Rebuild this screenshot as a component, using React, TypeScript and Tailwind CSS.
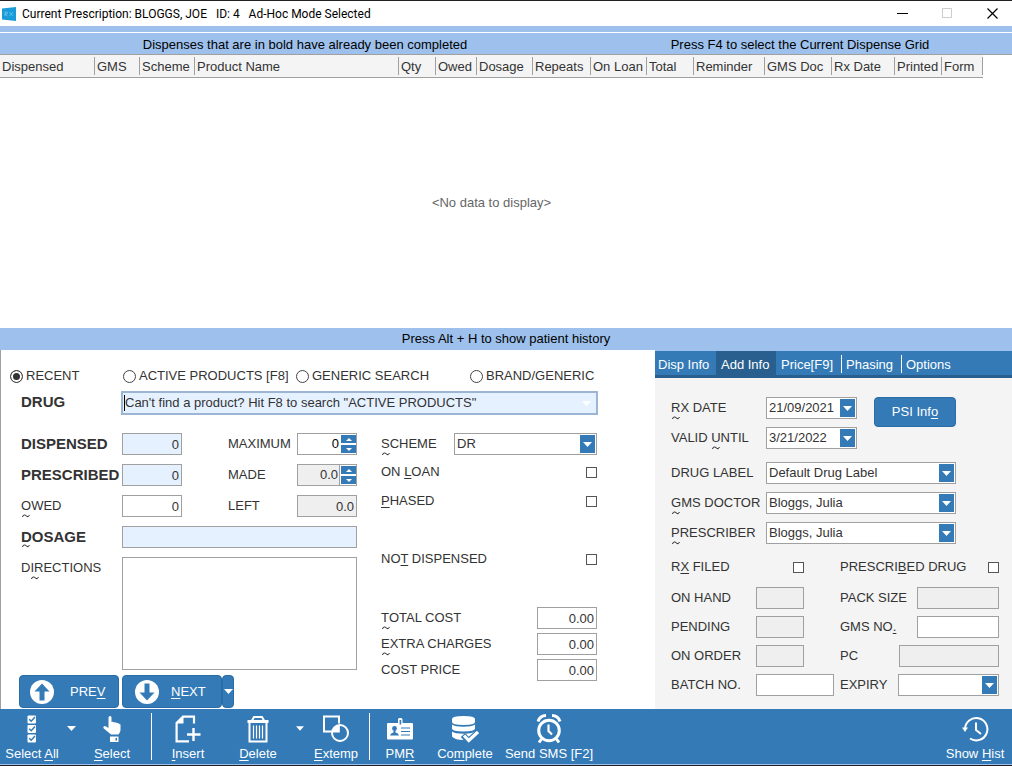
import type { ReactNode } from "react";

const columns = [
  { label: "Dispensed", width: "w-[95px]" },
  { label: "GMS", width: "w-[45px]" },
  { label: "Scheme", width: "w-[55px]" },
  { label: "Product Name", width: "w-[204px]" },
  { label: "Qty", width: "w-[37px]" },
  { label: "Owed", width: "w-[41px]" },
  { label: "Dosage", width: "w-[56px]" },
  { label: "Repeats", width: "w-[58px]" },
  { label: "On Loan", width: "w-[56px]" },
  { label: "Total", width: "w-[47px]" },
  { label: "Reminder", width: "w-[71px]" },
  { label: "GMS Doc", width: "w-[67px]" },
  { label: "Rx Date", width: "w-[63px]" },
  { label: "Printed", width: "w-[47px]" },
  { label: "Form", width: "w-[41px]" },
];

const labelClass = "text-[13px] leading-[22px] text-[#333] whitespace-nowrap";
const boldClass = "text-[15px] font-bold leading-[22px] text-[#333] whitespace-nowrap";
const boxClass = "block h-[22px] min-w-0 border border-[#a0a0a0] px-[2px] text-[#333] outline-none";

// Accelerator letter with the small squiggle below it
function Key({ children }: { children: ReactNode }) {
  return (
    <span className="relative">
      {children}
      <svg className="absolute left-px top-4" width="8" height="4" viewBox="0 0 8 4">
        <path d="M.5 3Q1 .8 2.500 1T5 2.500 7.500 1" fill="none" stroke="#222" />
      </svg>
    </span>
  );
}

function U({ children }: { children: ReactNode }) {
  return <span className="underline underline-offset-2">{children}</span>;
}

function Triangle() {
  return (
    <svg width="9" height="5" viewBox="0 0 9 5" fill="currentColor">
      <path d="M0 0h9L4.500 5z" />
    </svg>
  );
}

function DropBox({ id, value, className = "" }: { id: string; value: string; className?: string }) {
  return (
    <div className={`relative h-[22px] ${className}`}>
      <select id={id} className={`${boxClass} w-full appearance-none bg-white pr-5`} defaultValue={value}>
        <option>{value}</option>
      </select>
      <span className="pointer-events-none absolute right-[2px] top-[2px] flex h-[18px] w-[15px] items-center justify-center bg-[#337ab7] text-white">
        <Triangle />
      </span>
    </div>
  );
}

function Spinner({ id, value, disabled = false }: { id: string; value: string; disabled?: boolean }) {
  return (
    <div className="flex h-[22px] w-[60px] border border-[#a0a0a0] bg-white">
      <input
        id={id}
        defaultValue={value}
        className={`w-[42px] min-w-0 pr-px text-right outline-none ${disabled ? "border-r border-[#a0a0a0] bg-[#efefef] text-[#333]" : "bg-white text-black"}`}
      />
      <div className="flex flex-col gap-[2px] py-px pl-px">
        <button aria-label="Increase" className="flex h-2 w-[15px] items-center justify-center bg-[#337ab7] text-white">
          <svg width="6" height="3" viewBox="0 0 6 3" fill="currentColor"><path d="M0 3h6L3 0z" /></svg>
        </button>
        <button aria-label="Decrease" className="flex h-2 w-[15px] items-center justify-center bg-[#337ab7] text-white">
          <svg width="6" height="3" viewBox="0 0 6 3" fill="currentColor"><path d="M0 0h6L3 3z" /></svg>
        </button>
      </div>
    </div>
  );
}

function Radio({ label, id, checked = false }: { label: string; id: string; checked?: boolean }) {
  return (
    <div className="flex items-center gap-[3px]">
      <input
        type="radio"
        name="search"
        id={id}
        defaultChecked={checked}
        className="size-[13px] shrink-0 appearance-none rounded-full border border-[#444] bg-white checked:bg-[#333] checked:shadow-[inset_0_0_0_2px_#fff]"
      />
      <label htmlFor={id} className={labelClass}>{label}</label>
    </div>
  );
}

function Check({ id }: { id: string }) {
  return <input type="checkbox" id={id} className="size-[11px] shrink-0 appearance-none border border-[#555] bg-white checked:bg-[#333]" />;
}

function ToolButton({ icon, width, children }: { icon: ReactNode; width: string; children: ReactNode }) {
  return (
    <button className={`flex flex-col items-center pt-[6px] ${width}`}>
      <span className="flex h-7 items-center justify-center">{icon}</span>
      <span className="mt-px whitespace-nowrap leading-5">{children}</span>
    </button>
  );
}

function SelectAllIcon() {
  return (
    <svg width="10" height="28" viewBox="0 0 10 28">
      {[0, 9.5, 19].map((y) => (
        <g key={y} transform={`translate(0 ${y})`}>
          <rect x="0.5" y="0.5" width="8.5" height="8" rx="1" fill="#fff" />
          <path d="M2.200 4.200l2 2 3.800-4.200" fill="none" stroke="#337ab7" strokeWidth="1.500" />
        </g>
      ))}
    </svg>
  );
}

function HandIcon() {
  return (
    <svg width="18" height="28" viewBox="0 0 18 28" fill="#fff">
      <path d="M5.500 2.500Q5.500 1 7 1t1.500 1.500V7q1.500-.8 2.700.5 1.500-.7 2.600.6 1.300-.5 2.200.6L17.500 9.500V15q0 2.500-2 4.500H8L.8 13.500q-1-1.300 0-2.100 1-.7 2.200.1l2.500 1.500z" />
      <path d="M7 21.500h8.500V27H7z" />
      <path d="M12.500 23H14v2.500h-1.500z" fill="#337ab7" />
    </svg>
  );
}

function InsertIcon() {
  return (
    <svg width="26" height="28" viewBox="0 0 26 28" fill="none" stroke="#fff" strokeWidth="2.200">
      <path d="M19 8.500V1.600H8L1.600 8v18.400H14" />
      <path d="M8.500 1L1 8.500h7.500z" fill="#fff" stroke="none" />
      <path d="M18.500 13v13M12 19.500h13.500" strokeWidth="2.400" />
    </svg>
  );
}

function TrashIcon() {
  return (
    <svg width="22" height="28" viewBox="0 0 22 28" fill="none" stroke="#fff" strokeWidth="2">
      <path d="M0.500 6.500h21" strokeWidth="3" />
      <path d="M5 5.500L7 2h8l2 3.500" />
      <path d="M2.500 7.500V26.500h17V7.500" />
      <path d="M6.500 10.500v13M9.500 10.500v13M12.500 10.500v13M15.500 10.500v13" strokeWidth="1.200" />
    </svg>
  );
}

function ExtempIcon() {
  return (
    <svg width="26" height="28" viewBox="0 0 26 28" fill="none" stroke="#fff" strokeWidth="2">
      <path d="M16 8.500V1.500H1v15h7.500" />
      <circle cx="17" cy="18" r="8" />
      <path d="M9 17.500A8 8 0 0 1 16.800 10v7.500z" fill="#fff" stroke="none" />
    </svg>
  );
}

function PmrIcon() {
  return (
    <svg width="26" height="28" viewBox="0 0 26 28">
      <path d="M1 8h10V4.500q0-1.500 1.500-1.500h1.500q1.500 0 1.500 1.500V8H25q1 0 1 1v14.500q0 1-1 1H1q-1 0-1-1V9q0-1 1-1z" fill="#fff" />
      <path d="M12.600 5h1.600v4.500h-1.600z" fill="#337ab7" />
      <circle cx="7.500" cy="13.500" r="2.400" fill="#337ab7" />
      <path d="M3 20.500q.5-2.500 3.500-3v-2h2v2q3 .5 3.500 3z" fill="#337ab7" />
      <path d="M14 13h9M14 16.500h9M14 20h9" stroke="#337ab7" strokeWidth="1.200" />
    </svg>
  );
}

function CompleteIcon() {
  return (
    <svg width="27" height="28" viewBox="0 0 27 28">
      <path d="M0 4q0-3 11.500-3T23 4v3q0 3-11.500 3T0 7z" fill="#fff" />
      <path d="M0 9.500q3 2.200 11.500 2.200T23 9.500v4q0 3-11.500 3T0 13.500z" fill="#fff" />
      <path d="M0 16.500q3 2.200 11.500 2.200T23 16.500v5q-3 3.500-11.500 3.500T0 21.500z" fill="#fff" />
      <path d="M11 20l5.500 6L27 16.500" fill="none" stroke="#337ab7" strokeWidth="6" />
      <path d="M12 20.500l4.800 5L26 17" fill="none" stroke="#fff" strokeWidth="3.200" />
    </svg>
  );
}

function AlarmIcon() {
  return (
    <svg width="26" height="30" viewBox="0 0 26 30" fill="none" stroke="#fff">
      <circle cx="13" cy="16.500" r="10.300" strokeWidth="3" />
      <path d="M2 7.500Q4 1.500 10 1.500M24 7.500Q22 1.500 16 1.500" strokeWidth="3" />
      <path d="M5.500 25L3 28.500M20.500 25l2.500 3.500" strokeWidth="3" />
      <path d="M12.500 10.500v6.500l3.500 3.500" strokeWidth="2.200" />
    </svg>
  );
}

function HistoryIcon() {
  return (
    <svg width="27" height="28" viewBox="0 0 27 28" fill="none" stroke="#fff" strokeWidth="2">
      <path d="M3 14A11.200 11.200 0 1 1 8 23.500" />
      <path d="M0 12.500h6L3 17z" fill="#fff" stroke="none" />
      <path d="M14 7.500V15l5 4" />
    </svg>
  );
}

function RoundArrow({ up = false }: { up?: boolean }) {
  return (
    <svg width="24" height="24" viewBox="0 0 24 24" className={up ? "rotate-180" : ""}>
      <circle cx="12" cy="12" r="12" fill="#fff" />
      <path d="M12 20.500L4.500 12.500h5V3.500h5v9h5z" fill="#337ab7" />
    </svg>
  );
}

function TitleBar() {
  return (
    <header className="flex h-[26px] items-center border-t border-[#231f20] bg-white pl-[2px]">
      <svg width="14" height="14" viewBox="0 0 14 14">
        <path d="M0 1.500L14 0v14L0 12.500z" fill="#1a9ad7" />
        <path d="M3 9V5h2q1.200 1 0 2H3l2.500 2M7.500 5l3.500 4M11 5L7.500 9" fill="none" stroke="#6cc6ee" strokeWidth="0.800" />
      </svg>
      <h1 className="ml-[6px] whitespace-pre font-['Roboto'] text-[12px] leading-4 text-black">
        {"Current Prescription: BLOGGS, JOE   ID: 4   Ad-Hoc Mode Selected"}
      </h1>
      <div className="ml-auto flex items-center gap-[34px] pr-[14px] text-black">
        <button aria-label="Minimise">
          <svg width="11" height="11" viewBox="0 0 11 11"><path d="M0 5.500h11" stroke="currentColor" /></svg>
        </button>
        <button aria-label="Maximise" disabled className="text-[#ccc]">
          <svg width="11" height="11" viewBox="0 0 11 11"><path d="M.5.5h9v9H.5z" fill="none" stroke="currentColor" /></svg>
        </button>
        <button aria-label="Close">
          <svg width="11" height="11" viewBox="0 0 11 11"><path d="M.5.5l10 10M10.500.5l-10 10" stroke="currentColor" strokeWidth="1.200" /></svg>
        </button>
      </div>
    </header>
  );
}

function DrugForm() {
  return (
    <section className="flex min-w-0 flex-1 flex-col border-l border-[#a0a0a0] bg-white pt-[15px]">
      <div className="grid grid-cols-[113px_173px_174px_auto] pl-[9px]">
        <Radio id="recent" label="RECENT" checked />
        <Radio id="active" label="ACTIVE PRODUCTS [F8]" />
        <Radio id="generic" label="GENERIC SEARCH" />
        <Radio id="brand" label="BRAND/GENERIC" />
      </div>

      <div className="mt-1 flex pl-5">
        <label htmlFor="drug" className={`w-[100px] ${boldClass}`}>DRUG</label>
        <div className="flex h-6 w-[477px] items-center border-2 border-[#9bb5d3] bg-[#e5f1ff] pl-px pr-[5px]">
          <span className="h-4 w-px bg-black" />
          <input id="drug" defaultValue={'Can\'t find a product? Hit F8 to search "ACTIVE PRODUCTS"'} className="min-w-0 flex-1 outline-none" />
          <span className="text-white"><Triangle /></span>
        </div>
      </div>

      <div className="mt-[18px] flex gap-6 pl-[18px]">
        <div className="w-[338px]">
          <div className="grid grid-cols-[101px_106px_69px_60px] gap-y-[9px] pl-[2px]">
            <label htmlFor="dispensed" className={boldClass}>DISPENSED</label>
            <input id="dispensed" defaultValue="0" className={`${boxClass} w-[60px] bg-[#e5f1ff] text-right`} />
            <label htmlFor="maximum" className={labelClass}>MAXIMUM</label>
            <Spinner id="maximum" value="0" />

            <label htmlFor="prescribed" className={boldClass}>PRESCRIBED</label>
            <input id="prescribed" defaultValue="0" className={`${boxClass} w-[60px] bg-[#e5f1ff] text-right`} />
            <label htmlFor="made" className={labelClass}>MADE</label>
            <Spinner id="made" value="0.0" disabled />

            <label htmlFor="owed" className={labelClass}><Key>O</Key>WED</label>
            <input id="owed" defaultValue="0" className={`${boxClass} w-[60px] bg-white text-right`} />
            <label htmlFor="left" className={labelClass}>LEFT</label>
            <input id="left" defaultValue="0.0" className={`${boxClass} w-[60px] bg-[#efefef] text-right`} />

            <label htmlFor="dosage" className={boldClass}><Key>D</Key>OSAGE</label>
            <input id="dosage" className={`${boxClass} col-span-3 bg-[#e5f1ff]`} />

            <label htmlFor="directions" className={labelClass}>D<Key>I</Key>RECTIONS</label>
            <textarea id="directions" className="col-span-3 block h-[113px] resize-none border border-[#a0a0a0] bg-white p-[2px] outline-none" />
          </div>

          <div className="mt-[5px] flex gap-[3px] text-white">
            <button className="flex h-[33px] w-[100px] items-center rounded border border-[#2a6ca6] bg-[#337ab7] pl-[10px]">
              <RoundArrow up />
              <span className="ml-4">PRE<U>V</U></span>
            </button>
            <div className="flex">
              <button className="flex h-[33px] w-[100px] items-center rounded border border-[#2a6ca6] bg-[#337ab7] pl-3">
                <RoundArrow />
                <span className="ml-3"><U>N</U>EXT</span>
              </button>
              <button aria-label="More" className="flex h-[33px] w-3 items-center justify-center rounded border border-[#2a6ca6] bg-[#337ab7]">
                <Triangle />
              </button>
            </div>
          </div>
        </div>

        <div className="w-[216px]">
          <div className="flex justify-between">
            <label htmlFor="scheme" className={labelClass}><Key>S</Key>CHEME</label>
            <DropBox id="scheme" value="DR" className="w-[143px]" />
          </div>
          <div className="mt-[6px] flex items-center justify-between">
            <label htmlFor="onloan" className={labelClass}>ON <U>L</U>OAN</label>
            <Check id="onloan" />
          </div>
          <div className="mt-[7px] flex items-center justify-between">
            <label htmlFor="phased" className={labelClass}><U>P</U>HASED</label>
            <Check id="phased" />
          </div>
          <div className="mt-9 flex items-center justify-between">
            <label htmlFor="notdispensed" className={labelClass}>NO<U>T</U> DISPENSED</label>
            <Check id="notdispensed" />
          </div>
          <div className="mt-[37px] flex flex-col gap-1">
            <div className="flex justify-between">
              <label htmlFor="total" className={labelClass}><Key>T</Key>OTAL COST</label>
              <input id="total" defaultValue="0.00" className={`${boxClass} w-[60px] bg-white text-right`} />
            </div>
            <div className="flex justify-between">
              <label htmlFor="extra" className={labelClass}><Key>E</Key>XTRA CHARGES</label>
              <input id="extra" defaultValue="0.00" className={`${boxClass} w-[60px] bg-white text-right`} />
            </div>
            <div className="flex justify-between">
              <label htmlFor="cost" className={labelClass}>COST PRICE</label>
              <input id="cost" defaultValue="0.00" className={`${boxClass} w-[60px] bg-white text-right`} />
            </div>
          </div>
        </div>
      </div>
    </section>
  );
}

function InfoPanel() {
  return (
    <section className="flex w-[357px] shrink-0 flex-col border-t border-[#9dc1ec] bg-[#f4f4f4]">
      <nav className="flex h-[27px] border-b-[3px] border-[#285f8f] bg-[#337ab7] text-white">
        <button className="w-[61px] pl-[3px] pt-1 text-left">Disp Info</button>
        <button className="w-[60px] bg-[#285f8f] pl-[5px] pt-1 text-left">Add Info</button>
        <button className="w-[65px] pl-[5px] pt-1 text-left">Price[F9]</button>
        <span className="mt-1 h-[18px] w-px bg-white" />
        <button className="w-[59px] pl-1 pt-1 text-left">Phasing</button>
        <span className="mt-1 h-[18px] w-px bg-white" />
        <button className="pl-1 pt-1 text-left">Options</button>
      </nav>

      <div className="flex flex-col pb-[13px] pl-4 pr-[13px] pt-[19px]">
        <div className="flex">
          <div className="grid grid-cols-[95px_91px] gap-y-2">
            <label htmlFor="rxdate" className={labelClass}><Key>R</Key>X DATE</label>
            <DropBox id="rxdate" value="21/09/2021" />
            <label htmlFor="valid" className={labelClass}>VALID <Key>U</Key>NTIL</label>
            <DropBox id="valid" value="3/21/2022" />
          </div>
          <button className="ml-[17px] h-[30px] w-[82px] rounded border border-[#2a6ca6] bg-[#337ab7] text-white">PSI Inf<U>o</U></button>
        </div>

        <div className="mt-[13px] grid grid-cols-[95px_190px] gap-y-2">
          <label htmlFor="druglabel" className={labelClass}>DRUG LABEL</label>
          <DropBox id="druglabel" value="Default Drug Label" />
          <label htmlFor="doctor" className={labelClass}><Key>G</Key>MS DOCTOR</label>
          <DropBox id="doctor" value="Bloggs, Julia" />
          <label htmlFor="prescriber" className={labelClass}><Key>P</Key>RESCRIBER</label>
          <DropBox id="prescriber" value="Bloggs, Julia" />
        </div>

        <div className="mt-3 grid grid-cols-[163px_159px] gap-x-[6px] gap-y-[7px]">
          <div className="mb-[2px] flex items-center justify-between pr-[30px]">
            <label htmlFor="rxfiled" className={labelClass}>R<U>X</U> FILED</label>
            <Check id="rxfiled" />
          </div>
          <div className="mb-[2px] flex items-center justify-between">
            <label htmlFor="prescribeddrug" className={labelClass}>PRESCRI<U>B</U>ED DRUG</label>
            <Check id="prescribeddrug" />
          </div>

          <div className="flex">
            <label htmlFor="onhand" className={`w-[85px] ${labelClass}`}>ON HAND</label>
            <input id="onhand" className={`${boxClass} w-12 bg-[#efefef]`} />
          </div>
          <div className="flex justify-between">
            <label htmlFor="packsize" className={labelClass}>PACK SIZE</label>
            <input id="packsize" className={`${boxClass} w-[82px] bg-[#efefef]`} />
          </div>

          <div className="flex">
            <label htmlFor="pending" className={`w-[85px] ${labelClass}`}>PENDING</label>
            <input id="pending" className={`${boxClass} w-12 bg-[#efefef]`} />
          </div>
          <div className="flex justify-between">
            <label htmlFor="gmsno" className={labelClass}>GMS NO<U>.</U></label>
            <input id="gmsno" className={`${boxClass} w-[82px] bg-white`} />
          </div>

          <div className="flex">
            <label htmlFor="onorder" className={`w-[85px] ${labelClass}`}>ON ORDER</label>
            <input id="onorder" className={`${boxClass} w-12 bg-[#efefef]`} />
          </div>
          <div className="flex justify-between">
            <label htmlFor="pc" className={labelClass}>PC</label>
            <input id="pc" className={`${boxClass} w-[100px] bg-[#efefef]`} />
          </div>

          <div className="flex">
            <label htmlFor="batch" className={`w-[85px] ${labelClass}`}>BATCH NO.</label>
            <input id="batch" className={`${boxClass} w-[78px] bg-white`} />
          </div>
          <div className="flex justify-between">
            <label htmlFor="expiry" className={labelClass}>EXPIRY</label>
            <DropBox id="expiry" value="" className="w-[101px]" />
          </div>
        </div>
      </div>
    </section>
  );
}

function Toolbar() {
  return (
    <footer className="flex h-[57px] border-b border-[#231f20] bg-[#337ab7] text-white">
      <div className="flex flex-1 border-b border-[#9dc1ec]">
        <ToolButton width="w-16" icon={<SelectAllIcon />}>Select <U>A</U>ll</ToolButton>
        <button aria-label="Select options" className="flex w-[14px] justify-center pt-[17px]"><Triangle /></button>
        <ToolButton width="w-[68px]" icon={<HandIcon />}><U>S</U>elect</ToolButton>
        <span className="my-1 ml-[5px] mr-1 w-px bg-white" />
        <ToolButton width="w-16" icon={<InsertIcon />}><U>I</U>nsert</ToolButton>
        <ToolButton width="w-[76px]" icon={<TrashIcon />}><U>D</U>elete</ToolButton>
        <button aria-label="Delete options" className="flex w-2 justify-center pt-[17px]"><Triangle /></button>
        <ToolButton width="w-16" icon={<ExtempIcon />}><U>E</U>xtemp</ToolButton>
        <span className="my-1 ml-px mr-[2px] w-px bg-white" />
        <ToolButton width="w-14" icon={<PmrIcon />}>PM<U>R</U></ToolButton>
        <ToolButton width="w-[74px]" icon={<CompleteIcon />}>Co<U>m</U>plete</ToolButton>
        <ToolButton width="w-[94px]" icon={<AlarmIcon />}>Send SMS [F2]</ToolButton>
        <div className="ml-auto flex">
          <ToolButton width="w-[74px]" icon={<HistoryIcon />}>Show <U>H</U>ist</ToolButton>
        </div>
      </div>
    </footer>
  );
}

export default function App() {
  return (
    <div className="flex min-h-screen flex-col bg-white font-['Liberation_Sans',sans-serif] text-[13px] text-[#333]">
      <TitleBar />
      <div className="h-[7px] border-b border-white bg-[#9dc1ec]" />
      <div className="grid h-[22px] grid-cols-[610px_1fr] border-b border-[#a0a0a0] bg-[#9dc1ec] text-center leading-[23px] text-black">
        <p>Dispenses that are in bold have already been completed</p>
        <p className="pr-[22px]">Press F4 to select the Current Dispense Grid</p>
      </div>

      <table className="w-[983px] table-fixed border-b border-[#a0a0a0] bg-[#f4f4f4]">
        <thead>
          <tr>
            {columns.map((col) => (
              <th key={col.label} scope="col" className={`h-[21px] p-0 py-[2px] text-left font-normal ${col.width}`}>
                <div className="h-[18px] whitespace-nowrap border-r border-[#a0a0a0] pl-[2px] leading-5">{col.label}</div>
              </th>
            ))}
          </tr>
        </thead>
      </table>

      <div className="flex min-h-[120px] w-[983px] flex-1 items-center justify-center text-[#666]">&lt;No data to display&gt;</div>

      <div className="h-[22px] bg-[#9dc1ec] text-center leading-[22px] text-black">Press Alt + H to show patient history</div>

      <main className="flex">
        <DrugForm />
        <InfoPanel />
      </main>
      <Toolbar />
    </div>
  );
}
